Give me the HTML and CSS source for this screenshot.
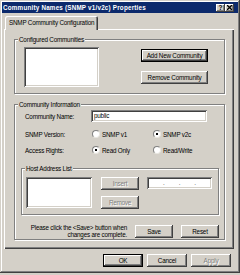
FILE: index.html
```html
<!DOCTYPE html>
<html lang="en">
<head>
    <meta charset="UTF-8">
    <meta name="viewport" content="width=device-width, initial-scale=1.0">
    <title>Community Names (SNMP v1/v2c) Properties</title>
    <link rel="stylesheet" href="styles.css">
</head>
<body>
    <div class="window">
        <!-- title bar -->
        <div class="titlebar">
            <span class="title">Community Names (SNMP v1/v2c) Properties</span>
            <span class="cap-btn">?</span>
            <span class="cap-btn">
                <svg width="5" height="5" viewBox="0 0 5 5"><path d="M0 0L5 5M5 0L0 5" stroke="#000" stroke-width="1.3"/></svg>
            </span>
        </div>

        <!-- tab strip -->
        <div class="tabs">
            <span class="tab">SNMP Community Configuration</span>
        </div>

        <div class="panel">
            <!-- configured communities -->
            <div class="group communities">
                <span class="legend">Configured Communities</span>
                <div class="listbox list-communities"></div>
                <div class="btn-col">
                    <button class="btn btn-wide default">Add New Community</button>
                    <button class="btn btn-wide">Remove Community</button>
                </div>
            </div>

            <!-- community information -->
            <div class="group info">
                <span class="legend">Community Information</span>
                <div class="row">
                    <span class="row-label">Community Name:</span>
                    <div class="field name-field">public</div>
                </div>
                <div class="row row-version">
                    <span class="row-label">SNMP Version:</span>
                    <span class="radio-opt"><span class="radio"></span>SNMP v1</span>
                    <span class="radio-opt"><span class="radio checked"></span>SNMP v2c</span>
                </div>
                <div class="row row-access">
                    <span class="row-label">Access Rights:</span>
                    <span class="radio-opt"><span class="radio checked"></span>Read Only</span>
                    <span class="radio-opt"><span class="radio"></span>Read/Write</span>
                </div>

                <div class="group hosts">
                    <span class="legend">Host Address List</span>
                    <div class="listbox list-hosts"></div>
                    <div class="btn-col host-btns">
                        <button class="btn btn-small" disabled>Insert</button>
                        <button class="btn btn-small" disabled>Remove</button>
                    </div>
                    <div class="field ip-field">
                        <span></span><i>.</i><span></span><i>.</i><span></span><i>.</i><span></span>
                    </div>
                </div>

                <div class="save-row">
                    <p class="note">Please click the &lt;Save&gt; button when<br>changes are complete.</p>
                    <button class="btn btn-small">Save</button>
                    <button class="btn btn-small">Reset</button>
                </div>
            </div>
        </div>

        <!-- dialog buttons -->
        <div class="footer">
            <button class="btn btn-dlg default">OK</button>
            <button class="btn btn-dlg">Cancel</button>
            <button class="btn btn-dlg" disabled>Apply</button>
        </div>
    </div>
</body>
</html>
```

FILE: styles.css
```css
/* Base */
* {
    box-sizing: border-box;
}
body {
    margin: 0;
    background: #d4d0c8;
    font-family: "Liberation Sans", Arial, sans-serif;
    font-size: 6.3px;
    letter-spacing: -0.2px;
    color: #000;
}
.window {
    width: 240px;
    height: 273px;
    padding: 2px;
    background: #d4d0c8;
    box-shadow: inset -1px -1px #404040, inset 1px 1px #d4d0c8, inset -2px -2px #808080, inset 2px 2px #fff;
}

/* Title bar */
.titlebar {
    display: flex;
    align-items: center;
    height: 11px;
    padding: 0 4px 0 1px;
    background: #0c2a6c;
}
.title {
    flex: 1;
    color: #fff;
    font-weight: bold;
    letter-spacing: 0.2px;
    white-space: nowrap;
}
.cap-btn {
    display: flex;
    align-items: center;
    justify-content: center;
    width: 9px;
    height: 8px;
    background: #d4d0c8;
    font-weight: bold;
    font-size: 6.5px;
    letter-spacing: 0;
    box-shadow: inset -1px -1px #404040, inset 1px 1px #fff, inset -2px -2px #808080;
}

/* Tabs */
.tabs {
    position: relative;
    z-index: 1;
    display: flex;
    margin-top: 3px;
    margin-bottom: -1px;
    padding-left: 3px;
}
.tab {
    height: 14px;
    padding: 0 4px;
    line-height: 13px;
    background: #d4d0c8;
    border-radius: 2px 2px 0 0;
    box-shadow: inset 1px 1px #fff, inset -1px 0 #404040, inset -2px 0 #808080;
}
.panel {
    width: 230px;
    height: 220px;
    margin-left: 2px;
    padding: 10px 0 0 10px;
    box-shadow: inset 1px 1px #fff, inset -1px -1px #404040, inset -2px -2px #808080;
}

/* Group boxes */
.group {
    position: relative;
    border: 1px solid #808080;
    box-shadow: inset 1px 1px #fff, 1px 1px #fff;
}
.legend {
    position: absolute;
    top: -5px;
    left: 3px;
    padding: 0 1px;
    line-height: 9px;
    background: #d4d0c8;
    white-space: nowrap;
}
.communities {
    display: flex;
    align-items: flex-start;
    width: 211px;
    height: 55px;
    padding: 7px 0 0 9px;
}
.info {
    width: 211px;
    height: 136px;
    margin-top: 10px;
    padding: 5px 0 0 6px;
}
.hosts {
    display: flex;
    align-items: flex-start;
    width: 198px;
    height: 47px;
    margin-top: 12px;
    padding: 8px 0 0 4px;
}

/* Fields */
.listbox, .field {
    background: #fff;
    box-shadow: inset 1px 1px #808080, inset -1px -1px #fff, inset 2px 2px #404040, inset -2px -2px #d4d0c8;
}
.list-communities {
    width: 75px;
    height: 40px;
}
.list-hosts {
    width: 66px;
    height: 31px;
}
.field {
    height: 12px;
    padding: 0 3px;
    line-height: 12px;
}
.name-field {
    width: 116px;
}
.ip-field {
    display: flex;
    width: 65px;
    margin-left: 8px;
    padding: 0 2px;
}
.ip-field span {
    flex: 1;
}
.ip-field i {
    font-style: normal;
    color: #555;
}

/* Buttons */
.btn-col {
    display: flex;
    flex-direction: column;
    margin: 2px 0 0 42px;
    gap: 9px;
}
.host-btns {
    margin: 0 0 0 9px;
    gap: 6px;
}
.btn {
    height: 13px;
    padding: 0;
    border: none;
    background: #d4d0c8;
    font: inherit;
    letter-spacing: inherit;
    color: #000;
    box-shadow: inset -1px -1px #404040, inset 1px 1px #fff, inset -2px -2px #808080;
}
.btn.default {
    box-shadow: inset 0 0 0 1px #000, inset -2px -2px #404040, inset 2px 2px #fff, inset -3px -3px #808080;
}
.btn:disabled {
    color: #808080;
    text-shadow: 1px 1px #fff;
}
.btn-wide {
    width: 67px;
}
.btn-small {
    width: 38px;
}
.btn-dlg {
    width: 40px;
}

/* Rows */
.row {
    display: flex;
    align-items: center;
    height: 12px;
    padding-left: 4px;
}
.row-version {
    margin-top: 6px;
}
.row-access {
    margin-top: 4px;
}
.row-label {
    width: 66px;
}
.radio-opt {
    display: flex;
    align-items: center;
    width: 61px;
    padding-left: 1px;
    gap: 2px;
}
.radio {
    position: relative;
    width: 8px;
    height: 8px;
    border-radius: 50%;
    background: #fff;
    border: 1px solid;
    border-color: #808080 #e8e6e0 #e8e6e0 #808080;
}
.radio.checked::after {
    content: "";
    position: absolute;
    left: 2px;
    top: 2px;
    width: 2px;
    height: 2px;
    background: #000;
}

/* Save row */
.save-row {
    display: flex;
    align-items: center;
    justify-content: flex-end;
    margin-top: 10px;
    padding-right: 5px;
}
.note {
    margin: 0 8px 0 0;
    line-height: 6.5px;
    text-align: right;
}
.save-row .btn + .btn {
    margin-left: 8px;
}

/* Dialog buttons */
.footer {
    display: flex;
    justify-content: flex-end;
    gap: 4px;
    margin-top: 5px;
    padding-right: 7px;
}
```
